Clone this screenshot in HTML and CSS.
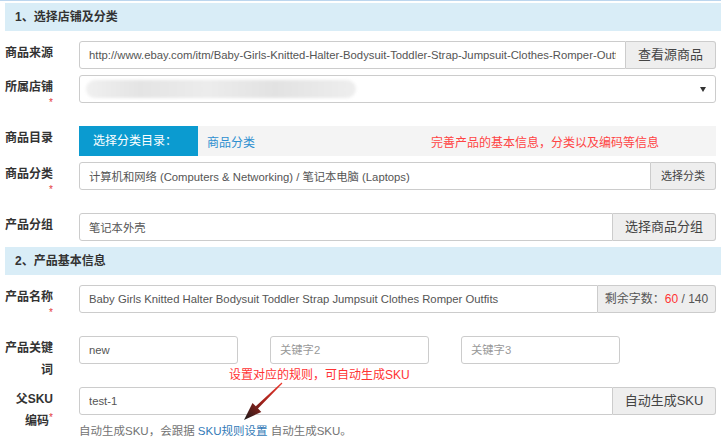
FILE: index.html
```html
<!DOCTYPE html>
<html lang="zh-CN">
<head>
    <meta charset="UTF-8">
    <meta name="viewport" content="width=device-width, initial-scale=1.0">
    <title>刊登产品</title>
    <link rel="stylesheet" href="styles.css">
</head>
<body>
    <div class="panel">
        <div class="section-title">1、选择店铺及分类</div>
        <div class="section-body">
            <div class="form-row">
                <label class="form-label">商品来源</label>
                <div class="form-field">
                    <div class="input-group">
                        <input class="form-input" type="text" value="http://www.ebay.com/itm/Baby-Girls-Knitted-Halter-Bodysuit-Toddler-Strap-Jumpsuit-Clothes-Romper-Outfits">
                        <button class="addon-btn addon-btn--lg source-btn">查看源商品</button>
                    </div>
                </div>
            </div>
            <div class="form-row">
                <label class="form-label">所属店铺<br><span class="required">*</span></label>
                <div class="form-field">
                    <div class="fake-select">
                        <span class="blurred"></span>
                        <span class="caret"></span>
                    </div>
                </div>
            </div>
            <div class="form-row">
                <label class="form-label">商品目录</label>
                <div class="form-field">
                    <div class="category-bar">
                        <span class="category-tab">选择分类目录：</span>
                        <a class="category-link" href="#">商品分类</a>
                        <span class="category-tip">完善产品的基本信息，分类以及编码等信息</span>
                    </div>
                </div>
            </div>
            <div class="form-row">
                <label class="form-label">商品分类<br><span class="required">*</span></label>
                <div class="form-field">
                    <div class="input-group">
                        <input class="form-input" type="text" value="计算机和网络 (Computers &amp; Networking) / 笔记本电脑 (Laptops)">
                        <button class="addon-btn addon-btn--sm">选择分类</button>
                    </div>
                </div>
            </div>
            <div class="form-row">
                <label class="form-label">产品分组</label>
                <div class="form-field">
                    <div class="input-group">
                        <input class="form-input" type="text" value="笔记本外壳">
                        <button class="addon-btn addon-btn--lg">选择商品分组</button>
                    </div>
                </div>
            </div>
        </div>

        <div class="section-title">2、产品基本信息</div>
        <div class="section-body">
            <div class="form-row">
                <label class="form-label">产品名称<br><span class="required">*</span></label>
                <div class="form-field">
                    <div class="input-group">
                        <input class="form-input" type="text" value="Baby Girls Knitted Halter Bodysuit Toddler Strap Jumpsuit Clothes Romper Outfits">
                        <span class="addon-btn addon-count">剩余字数：<span class="count">60</span> / 140</span>
                    </div>
                </div>
            </div>
            <div class="form-row">
                <label class="form-label">产品关键<br>词</label>
                <div class="form-field">
                    <div class="keyword-list">
                        <input class="form-input" type="text" value="new">
                        <input class="form-input" type="text" placeholder="关键字2">
                        <input class="form-input" type="text" placeholder="关键字3">
                    </div>
                </div>
            </div>
            <div class="form-row">
                <label class="form-label">父SKU<br>编码<span class="required required--inline">*</span></label>
                <div class="form-field">
                    <div class="input-group">
                        <input class="form-input" type="text" value="test-1">
                        <button class="addon-btn addon-btn--lg">自动生成SKU</button>
                    </div>
                    <p class="help-text">自动生成SKU，会跟据 <a href="#">SKU规则设置</a> 自动生成SKU。</p>
                </div>
            </div>
        </div>

        <!-- screenshot annotation -->
        <span class="sku-note">设置对应的规则，可自动生成SKU</span>
        <svg class="sku-arrow" width="52" height="48" viewBox="0 0 52 48">
            <defs>
                <linearGradient id="arrowFill" x1="1" y1="0" x2="0" y2="1">
                    <stop offset="0" stop-color="#f03a30"/>
                    <stop offset="0.5" stop-color="#a3221b"/>
                    <stop offset="1" stop-color="#1a1a1a"/>
                </linearGradient>
            </defs>
            <polygon fill="url(#arrowFill)" points="46.4,5.4 22,30.5 25.3,33.9 8,42 16.5,24.9 19.8,28.3 45.6,4.6"/>
        </svg>
    </div>
</body>
</html>
```

FILE: styles.css
```css
body{
    margin: 0;
    padding-top: 2px;
    border-top: 1px solid #bcd6ee;
    font-family: "Liberation Sans", "Noto Sans CJK SC", sans-serif;
    font-size: 12px;
    color: #333;
    background-color: #fff;
    overflow: hidden;
}
.panel{
    position: relative;
    margin-left: 5px;
}
.section-title{
    height: 28px;
    line-height: 28px;
    padding-left: 10px;
    background-color: #d9edf7;
    font-weight: bold;
    color: #333;
}
.section-body{
    padding: 10px 5px 0 0;
}
.form-row{
    display: flex;
    align-items: flex-start;
    margin-bottom: 6px;
}
.form-label{
    flex-shrink: 0;
    width: 48px;
    margin-right: 26px;
    padding-top: 1px;
    line-height: 22px;
    text-align: right;
    font-weight: bold;
    color: #333;
}
.required{
    color: #e4393c;
    font-size: 10px;
    font-weight: normal;
    line-height: 10px;
    vertical-align: top;
}
.required--inline{
    vertical-align: 4px;
}
.form-field{
    flex: 1;
    min-width: 0;
}
.input-group{
    display: flex;
    height: 28px;
}
.form-input{
    flex: 1;
    min-width: 0;
    height: 28px;
    box-sizing: border-box;
    margin: 0;
    padding: 0 9px;
    border: 1px solid #ccc;
    border-radius: 3px;
    font-family: "Liberation Sans", "Noto Sans CJK SC", sans-serif;
    font-size: 11.3px;
    color: #555;
    background-color: #fff;
    outline: 0;
}
.form-input::placeholder{
    color: #999;
}
.input-group .form-input{
    border-radius: 3px 0 0 3px;
}
.addon-btn{
    display: block;
    flex-shrink: 0;
    box-sizing: border-box;
    height: 28px;
    margin: 0;
    padding: 0;
    border: 1px solid #ccc;
    border-left: none;
    border-radius: 0 3px 3px 0;
    background-color: #eee;
    font-family: "Liberation Sans", "Noto Sans CJK SC", sans-serif;
    font-size: 12px;
    line-height: 26px;
    text-align: center;
    color: #444;
    white-space: nowrap;
}
.addon-btn--lg{
    width: 103px;
    font-size: 13px;
}
.source-btn{
    width: 90px;
}
.addon-btn--sm{
    width: 65px;
    font-size: 11px;
}
.addon-count{
    width: 118px;
    color: #555;
}
.addon-count .count{
    color: #f33;
}
/* fake select, store name is blurred out */
.fake-select{
    display: flex;
    align-items: center;
    height: 28px;
    box-sizing: border-box;
    padding: 0 9px 0 6px;
    border: 1px solid #ccc;
    border-radius: 3px;
}
.blurred{
    width: 270px;
    height: 18px;
    border-radius: 9px;
    background: linear-gradient(to right, #f0f0f0, #e4e4e4 20%, #ececec 45%, #e2e2e2 70%, #eeeeee);
    filter: blur(1.5px);
}
.caret{
    margin-left: auto;
    width: 0;
    height: 0;
    border-left: 3px solid transparent;
    border-right: 3px solid transparent;
    border-top: 5px solid #333;
}
.category-bar{
    display: flex;
    align-items: center;
    height: 30px;
    background-color: #f4f4f4;
}
.category-tab{
    width: 119px;
    height: 30px;
    box-sizing: border-box;
    padding-left: 14px;
    line-height: 30px;
    background-color: #0b9bd0;
    color: #fff;
}
.category-link{
    margin-left: 9px;
    color: #2e8fd0;
    text-decoration: none;
}
.category-tip{
    margin-left: 176px;
    color: #f44;
}
.keyword-list{
    display: flex;
    gap: 32px;
}
.keyword-list .form-input{
    flex: none;
    width: 159px;
}
.help-text{
    margin: 7px 0 0;
    font-size: 11.5px;
    line-height: 18px;
    color: #737373;
}
.help-text a{
    color: #337ab7;
    text-decoration: none;
}
.sku-note{
    position: absolute;
    left: 224px;
    top: 363px;
    line-height: 18px;
    color: #f33;
}
.sku-arrow{
    position: absolute;
    left: 231px;
    top: 375px;
}
```
